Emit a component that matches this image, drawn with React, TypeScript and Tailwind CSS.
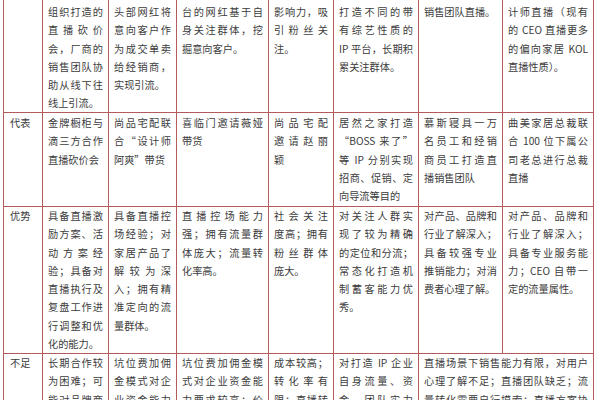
import React from "react";

type Row = {
  pt: string;
  label: string;
  cells: string[][];
  cut?: boolean;
  merged?: boolean;
};

const rows: Row[] = [
  {
    pt: "pt-[3px]",
    label: "",
    cells: [
      ["组织打造的", "直播砍价", "会，厂商的", "销售团队协", "助从线下往", "线上引流。"],
      ["头部网红将", "意向客户作", "为成交单卖", "给经销商，", "实现引流。"],
      ["台的网红基于自", "身关注群体，挖", "掘意向客户。"],
      ["影响力，吸", "引粉丝关", "注。"],
      ["打造不同的带", "有综艺性质的", "IP 平台，长期积", "累关注群体。"],
      ["销售团队直播。"],
      ["计师直播（现有", "的 CEO 直播更多", "的偏向家居 KOL", "直播性质）。"],
    ],
  },
  {
    pt: "pt-[1px]",
    label: "代表",
    cells: [
      ["金牌橱柜与", "滴三方合作", "直播砍价会"],
      ["尚品宅配联", "合“设计师", "阿爽”带货"],
      ["喜临门邀请薇娅", "带货"],
      ["尚品宅配", "邀请赵丽", "颖"],
      ["居然之家打造", "“BOSS 来了”", "等 IP 分别实现", "招商、促销、定", "向导流等目的"],
      ["慕斯寝具一万", "名员工和经销", "商员工打造直", "播销售团队"],
      ["曲美家居总裁联", "合 100 位下属公", "司老总进行总裁", "直播"],
    ],
  },
  {
    pt: "pt-0",
    label: "优势",
    cells: [
      ["具备直播激", "励方案、活", "动方案经", "验；具备对", "直播执行及", "复盘工作进", "行调整和优", "化的能力。"],
      ["具备直播控", "场经验；对", "家居产品了", "解较为深", "入；拥有精", "准定向的流", "量群体。"],
      ["直播控场能力", "强；拥有流量群", "体庞大；流量转", "化率高。"],
      ["社会关注", "度高；拥有", "粉丝群体", "庞大。"],
      ["对关注人群实", "现了较为精确", "的定位和分流；", "常态化打造机", "制蓄客能力优", "秀。"],
      ["对产品、品牌和", "行业了解深入；", "具备较强专业", "推销能力；对消", "费者心理了解。"],
      ["对产品、品牌和", "行业了解深入；", "具备专业服务能", "力；CEO 自带一", "定的流量属性。"],
    ],
  },
  {
    pt: "pt-0",
    label: "不足",
    cut: true,
    merged: true,
    cells: [
      ["长期合作较", "为困难；可", "能对品牌商"],
      ["坑位费加佣", "金模式对企", "业资金能力"],
      ["坑位费加佣金模", "式对企业资金能", "力要求较高；价"],
      ["成本较高；", "转化率有", "限；直播转"],
      ["对打造 IP 企业", "自身流量、资", "金、团队实力"],
      ["直播场景下销售能力有限，对用户", "心理了解不足；直播团队缺乏；流", "量转化需要自行摸索；直播方案协"],
    ],
  },
];

function Lines({ lines, cut }: { lines: string[]; cut?: boolean }) {
  return (
    <>
      {lines.map((l, i) => (
        <div
          key={i}
          className={
            cut || i < lines.length - 1
              ? "text-justify [text-align-last:justify]"
              : "text-left"
          }
        >
          {l}
        </div>
      ))}
    </>
  );
}

export default function App() {
  return (
    <div
      lang="zh-CN"
      className="w-[600px] h-[400px] overflow-hidden bg-white text-[#3c3c3c] text-[10.2px] leading-[18.3px] font-['Noto_Sans_CJK_SC','Noto_Sans',sans-serif]"
    >
      <div className="ml-[3px] w-max grid grid-cols-[38px_65px_67px_91px_64px_84px_83px_90px] grid-rows-[112px_93px_146px_100px] gap-px bg-[#b35b5d] px-px pb-px">
        {rows.map((r, ri) => (
          <React.Fragment key={ri}>
            <div className={`bg-white pl-[6px] pr-[4px] ${r.pt}`}>{r.label}</div>
            {r.cells.map((c, ci) => (
              <div
                key={ci}
                className={`bg-white px-[5px] ${r.pt} ${
                  r.merged && ci === r.cells.length - 1 ? "col-span-2" : ""
                }`}
              >
                <Lines lines={c} cut={r.cut} />
              </div>
            ))}
          </React.Fragment>
        ))}
      </div>
    </div>
  );
}
